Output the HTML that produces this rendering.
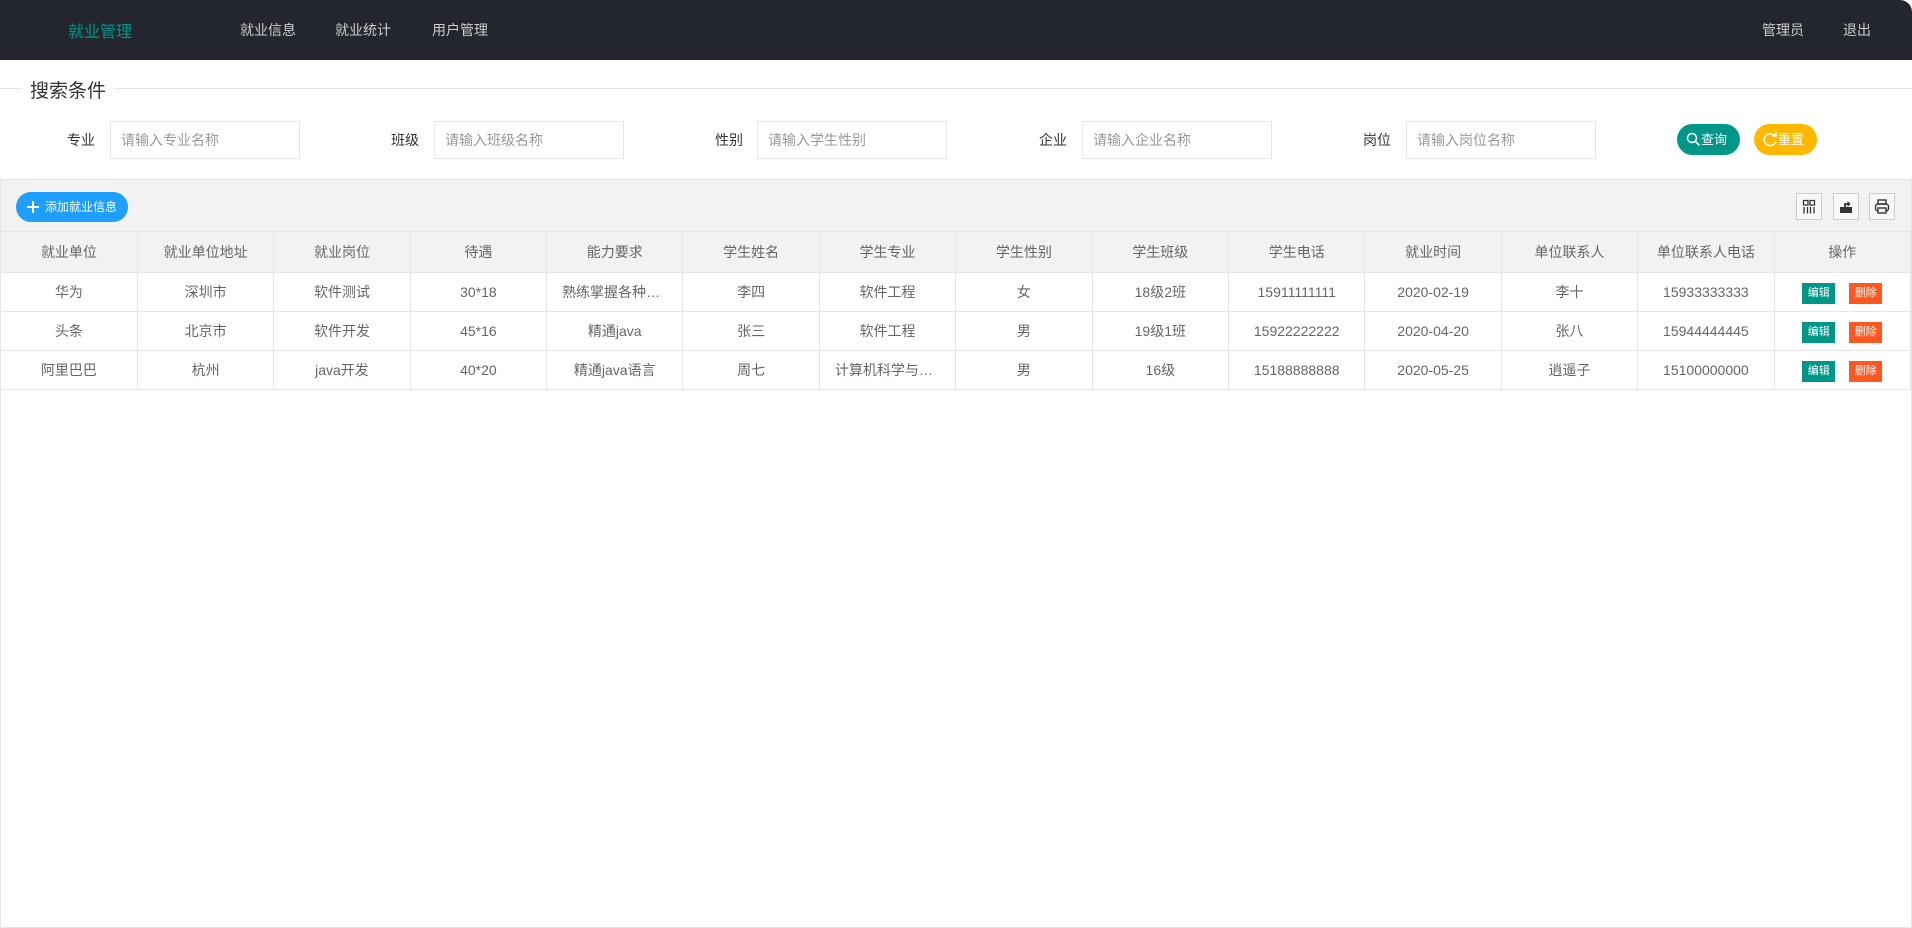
<!DOCTYPE html>
<html><head><meta charset="utf-8">
<style>
*{box-sizing:border-box;margin:0;padding:0}
body{width:1912px;height:928px;overflow:hidden;background:#fff;font-family:"Liberation Sans","Noto Sans CJK SC",sans-serif;font-size:14px;color:#666;position:relative}
.hd{position:absolute;left:0;top:0;width:1912px;height:60px;background:#23262e;border-radius:0 12px 0 0}
.hd span{position:absolute;top:20px;font-size:14px;color:#ccc}
.logo{left:68px;color:#009688!important;font-size:16px!important;top:18px!important}
.legend{position:absolute;left:0;top:88px;width:1912px;border-top:1px solid #e6e6e6}
.legend b{position:absolute;left:22px;top:-13px;background:#fff;padding:0 8px;font-weight:normal;font-size:19px;color:#333}
.lab{position:absolute;top:130px;font-size:14px;color:#333}
.inp{position:absolute;top:121px;width:190px;height:38px;border:1px solid #e6e6e6;padding-left:10px;line-height:36px;color:#999;font-size:14px}
.btn{position:absolute;top:124px;height:31px;border-radius:16px;color:#fff;font-size:13px;line-height:31px;padding-left:24px}
.panel{position:absolute;left:0;top:179px;width:1912px;height:749px;border:1px solid #e6e6e6}
.tb{height:52px;background:#f2f2f2;border-bottom:1px solid #e6e6e6;position:relative}
.add{position:absolute;left:15px;top:12px;width:112px;height:30px;background:#1e9fff;border-radius:15px;color:#fff;font-size:12px;line-height:30px;padding-left:29px}
.add svg{position:absolute;left:11px;top:9px}
.ic{position:absolute;top:13px;width:26px;height:27px;border:1px solid #ccc;background:#f8f8f8}
.ic svg{position:absolute;left:0;top:0}
table{border-collapse:collapse;width:1910px;table-layout:fixed}
th,td{border:1px solid #e6e6e6;text-align:center;font-weight:normal;color:#666;white-space:nowrap;overflow:hidden;text-overflow:ellipsis;padding:0 15px}
th{height:40px;background:#f2f2f2;border-top:0}
td{height:39px}
tr td:first-child,tr th:first-child{border-left:0}
.e,.d{display:inline-block;width:33px;height:21px;line-height:21px;color:#fff;font-size:11px;vertical-align:middle;position:relative;top:2px}
.e{background:#009688;margin-right:14px}.d{background:#ff5722}
</style></head><body>
<div class="hd">
<span class="logo">就业管理</span>
<span style="left:240px">就业信息</span><span style="left:335px">就业统计</span><span style="left:432px">用户管理</span>
<span style="left:1762px">管理员</span><span style="left:1843px">退出</span>
</div>
<div class="legend"><b>搜索条件</b></div>
<span class="lab" style="left:67px">专业</span><div class="inp" style="left:110px">请输入专业名称</div>
<span class="lab" style="left:391px">班级</span><div class="inp" style="left:434px">请输入班级名称</div>
<span class="lab" style="left:715px">性别</span><div class="inp" style="left:757px">请输入学生性别</div>
<span class="lab" style="left:1039px">企业</span><div class="inp" style="left:1082px">请输入企业名称</div>
<span class="lab" style="left:1363px">岗位</span><div class="inp" style="left:1406px">请输入岗位名称</div>
<div class="btn" style="left:1677px;width:63px;background:#009688"><svg style="position:absolute;left:9px;top:8px" width="15" height="15" viewBox="0 0 15 15"><circle cx="6" cy="6" r="4.5" fill="none" stroke="#fff" stroke-width="1.5"/><path d="M9.5 9.5L13.5 13.5" stroke="#fff" stroke-width="1.6"/></svg>查询</div>
<div class="btn" style="left:1754px;width:63px;background:#ffb800"><svg style="position:absolute;left:9px;top:8px" width="15" height="15" viewBox="0 0 15 15"><path d="M12 4A6 6 0 1 0 13 9" fill="none" stroke="#fff" stroke-width="1.5"/><path d="M9 4H13V0" fill="none" stroke="#fff" stroke-width="1.5"/></svg>重置</div>
<div class="panel">
<div class="tb">
<div class="add"><svg width="12" height="12" viewBox="0 0 12 12"><path d="M6 0V12M0 6H12" stroke="#fff" stroke-width="2"/></svg>添加就业信息</div>
<div class="ic" style="left:1795px"><svg width="24" height="25" viewBox="0 0 24 25"><path d="M6.5 6.5h4.5v4.5h-4.5zM13 6.5h4.5v4.5h-4.5zM7 13v6.5M10.5 13v6.5M13.5 13v6.5M17 13v6.5" fill="none" stroke="#333" stroke-width="1.3"/></svg></div>
<div class="ic" style="left:1832px"><svg width="24" height="25" viewBox="0 0 24 25"><path d="M6 13h12v6H6z" fill="#333"/><path d="M11 13V10h4" fill="none" stroke="#333" stroke-width="1.8"/><path d="M13.5 7l3 3-3 3z" fill="#333"/></svg></div>
<div class="ic" style="left:1868px"><svg width="24" height="25" viewBox="0 0 24 25"><rect x="8" y="6" width="8" height="4" fill="none" stroke="#333" stroke-width="1.4"/><rect x="5.5" y="10" width="13" height="7" rx="2.5" fill="none" stroke="#333" stroke-width="1.4"/><rect x="8" y="14" width="8" height="5" fill="#f8f8f8" stroke="#333" stroke-width="1.4"/></svg></div>
</div>
<table>
<tr><th>就业单位</th><th>就业单位地址</th><th>就业岗位</th><th>待遇</th><th>能力要求</th><th>学生姓名</th><th>学生专业</th><th>学生性别</th><th>学生班级</th><th>学生电话</th><th>就业时间</th><th>单位联系人</th><th>单位联系人电话</th><th>操作</th></tr>
<tr><td>华为</td><td>深圳市</td><td>软件测试</td><td>30*18</td><td>熟练掌握各种编程语言</td><td>李四</td><td>软件工程</td><td>女</td><td>18级2班</td><td>15911111111</td><td>2020-02-19</td><td>李十</td><td>15933333333</td><td><span class="e">编辑</span><span class="d">删除</span></td></tr>
<tr><td>头条</td><td>北京市</td><td>软件开发</td><td>45*16</td><td>精通java</td><td>张三</td><td>软件工程</td><td>男</td><td>19级1班</td><td>15922222222</td><td>2020-04-20</td><td>张八</td><td>15944444445</td><td><span class="e">编辑</span><span class="d">删除</span></td></tr>
<tr><td>阿里巴巴</td><td>杭州</td><td>java开发</td><td>40*20</td><td>精通java语言</td><td>周七</td><td>计算机科学与技术</td><td>男</td><td>16级</td><td>15188888888</td><td>2020-05-25</td><td>逍遥子</td><td>15100000000</td><td><span class="e">编辑</span><span class="d">删除</span></td></tr>
</table>
</div>
</body></html>
